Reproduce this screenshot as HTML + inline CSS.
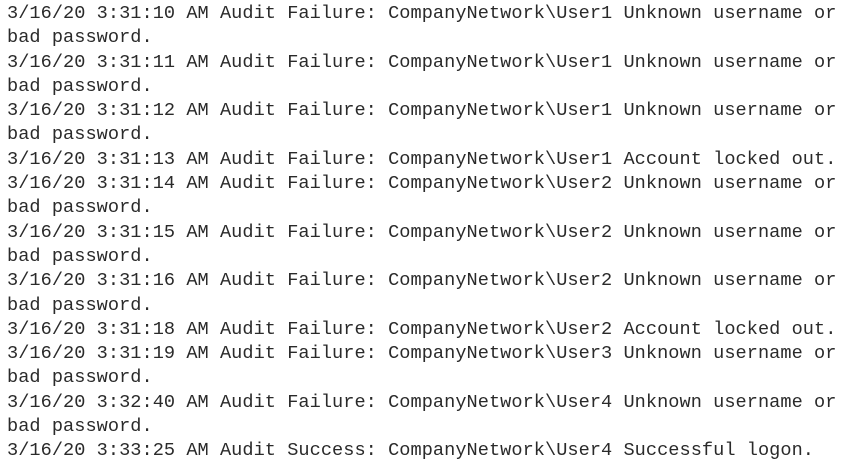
<!DOCTYPE html>
<html><head><meta charset="utf-8"><style>
html,body{margin:0;padding:0;background:#fff;width:850px;height:468px;overflow:hidden}
pre{margin:0;position:absolute;left:7px;top:2px;font-family:"Liberation Mono","Courier New",monospace;font-size:18.6px;line-height:24.3px;color:#2a2a2a;letter-spacing:0.05px}
</style></head><body>
<pre>3/16/20 3:31:10 AM Audit Failure: CompanyNetwork\User1 Unknown username or
bad password.
3/16/20 3:31:11 AM Audit Failure: CompanyNetwork\User1 Unknown username or
bad password.
3/16/20 3:31:12 AM Audit Failure: CompanyNetwork\User1 Unknown username or
bad password.
3/16/20 3:31:13 AM Audit Failure: CompanyNetwork\User1 Account locked out.
3/16/20 3:31:14 AM Audit Failure: CompanyNetwork\User2 Unknown username or
bad password.
3/16/20 3:31:15 AM Audit Failure: CompanyNetwork\User2 Unknown username or
bad password.
3/16/20 3:31:16 AM Audit Failure: CompanyNetwork\User2 Unknown username or
bad password.
3/16/20 3:31:18 AM Audit Failure: CompanyNetwork\User2 Account locked out.
3/16/20 3:31:19 AM Audit Failure: CompanyNetwork\User3 Unknown username or
bad password.
3/16/20 3:32:40 AM Audit Failure: CompanyNetwork\User4 Unknown username or
bad password.
3/16/20 3:33:25 AM Audit Success: CompanyNetwork\User4 Successful logon.</pre>
</body></html>
